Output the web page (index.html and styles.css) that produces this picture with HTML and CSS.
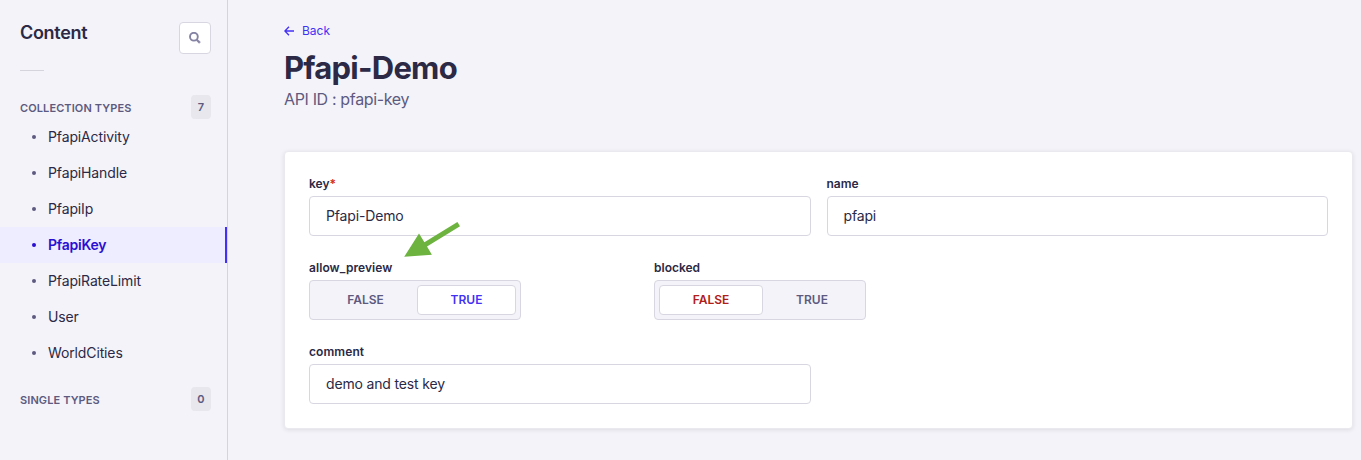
FILE: index.html
```html
<!DOCTYPE html>
<html lang="en">
<head>
<meta charset="utf-8">
<title>Pfapi-Demo</title>
<link rel="stylesheet" href="styles.css">
</head>
<body>
<div class="app">
  <nav class="sidebar">
    <div class="sidebar-head">
      <h2 class="sidebar-title">Content</h2>
      <button class="search" aria-label="Search">
        <svg width="12" height="12" viewBox="0 0 12 12" fill="none" stroke="#8583a3"><circle cx="4.9" cy="4.7" r="3.9" stroke-width="1.9"/><path d="M7.8 7.7h1.2l2.3 2.4-1.2 1.2-2.3-2.3z" fill="#8583a3" stroke-width=".7"/></svg>
      </button>
    </div>
    <div class="divider"></div>
    <div class="section-head"><span class="section-name">COLLECTION TYPES</span><span class="count">7</span></div>
    <ul class="links">
      <li class="link"><span>PfapiActivity</span></li>
      <li class="link"><span>PfapiHandle</span></li>
      <li class="link"><span>PfapiIp</span></li>
      <li class="link active"><span>PfapiKey</span></li>
      <li class="link"><span>PfapiRateLimit</span></li>
      <li class="link"><span>User</span></li>
      <li class="link"><span>WorldCities</span></li>
    </ul>
    <div class="section-head single"><span class="section-name">SINGLE TYPES</span><span class="count">0</span></div>
  </nav>
  <main class="main">
    <a class="back">
      <svg width="10" height="10" viewBox="0 0 10 10" fill="none" stroke="#4330f5" stroke-width="1.3"><path d="M10 5H1M5 .7L.9 5 5 9.3"/></svg>
      <span class="back-text">Back</span>
    </a>
    <h1 class="title">Pfapi-Demo</h1>
    <p class="subtitle">API ID : pfapi-key</p>
    <form class="card">
      <div class="field half">
        <label class="label">key<span class="required">*</span></label>
        <div class="input">Pfapi-Demo</div>
      </div>
      <div class="field half">
        <label class="label">name</label>
        <div class="input">pfapi</div>
      </div>
      <div class="field third">
        <label class="label wide">allow_preview</label>
        <div class="toggle"><span class="option off">FALSE</span><span class="option on selected">TRUE</span></div>
        <svg class="pointer" width="58" height="38" viewBox="0 0 58 38" fill="#6cb33f"><path d="M1.2 35.8L16 12.4l5.4 8.9L54.4 .9l2.6 4.3L24 25.4l4.9 8.4z"/></svg>
      </div>
      <div class="field third">
        <label class="label">blocked</label>
        <div class="toggle"><span class="option off selected">FALSE</span><span class="option on">TRUE</span></div>
      </div>
      <div class="field half new-row">
        <label class="label wide">comment</label>
        <div class="input">demo and test key</div>
      </div>
    </form>
  </main>
</div>
</body>
</html>
```
FILE: styles.css
```css
* { box-sizing: border-box; }
body { margin: 0; background: #f4f3f9; color: #2b2945; font-family: Inter, "Liberation Sans", sans-serif; }
h1, h2, p, ul { margin: 0; padding: 0; }
.app { display: flex; height: 460px; overflow: hidden; }
.sidebar { width: 228px; flex: none; border-right: 1px solid #d5d4dc; }
.sidebar-head { display: flex; justify-content: space-between; align-items: flex-start; padding: 22px 16px 0 20px; }
.sidebar-title { font-size: 18px; line-height: 22px; font-weight: 600; letter-spacing: -0.3px; }
.search { width: 32px; height: 32px; padding: 0; display: flex; align-items: center; justify-content: center; background: #fff; border: 1px solid #d8d7e1; border-radius: 4px; }
.divider { width: 24px; height: 1px; margin: 16px 0 24px 20px; background: #d5d4dc; }
.section-head { display: flex; justify-content: space-between; align-items: center; height: 24px; padding: 0 16px 0 20px; font-size: 11px; font-weight: 600; color: #5d5a80; letter-spacing: 0.1px; }
.section-name { padding-top: 2px; }
.single { margin-top: 16px; }
.count { width: 20px; height: 24px; line-height: 24px; text-align: center; border-radius: 4px; background: #e8e7ed; }
.links { list-style: none; }
.link { display: flex; align-items: center; gap: 12px; height: 36px; padding-left: 32px; font-size: 14px; letter-spacing: -0.13px; }
.link span { padding-bottom: 2px; }
.link::before { content: ""; width: 4px; height: 4px; border-radius: 50%; background: #5d5a80; }
.active { background: #eeecff; color: #2a0fd2; font-weight: 600; letter-spacing: -0.25px; border-right: 2px solid #4330f5; }
.active::before { background: #2a0fd2; }
.main { flex: 1; padding: 23px 8px 0 56px; }
.back { display: flex; align-items: center; gap: 8px; height: 16px; font-size: 12px; color: #4330f5; }
.back-text { padding-bottom: 2px; }
.title { margin-top: 9px; font-size: 31px; line-height: 40px; font-weight: 700; letter-spacing: -0.75px; height: 40px; }
.subtitle { margin-top: 1px; font-size: 16px; line-height: 20px; letter-spacing: -0.35px; color: #5d5a80; }
.card { display: grid; grid-template-columns: repeat(12, minmax(0, 1fr)); gap: 24px 16px; margin-top: 42px; padding: 24px; background: #fff; border: 1px solid #eae9ef; border-radius: 4px; box-shadow: 0 1px 4px rgba(33, 33, 52, 0.1); }
.field { position: relative; }
.half { grid-column: span 6; }
.third { grid-column: span 4; }
.new-row { grid-column: 1 / span 6; }
.label { display: block; height: 16px; margin-bottom: 4px; font-size: 12px; line-height: 16px; font-weight: 600; }
.wide { letter-spacing: 0.08px; }
.required { color: #d02b20; }
.input { height: 40px; padding: 0 16px; border: 1px solid #d8d7e1; border-radius: 4px; font-size: 14px; line-height: 38px; letter-spacing: -0.16px; }
.toggle { display: flex; width: 212px; height: 40px; padding: 4px; border: 1px solid #d8d7e1; border-radius: 4px; background: #f4f3f9; }
.option { display: flex; align-items: center; justify-content: center; padding-bottom: 2px; border: 1px solid transparent; border-radius: 4px; font-size: 12px; font-weight: 600; color: #5d5a80; }
.off { width: 104px; }
.on { flex: none; width: 98px; }
.on.selected { width: 99px; }
.selected { background: #fff; border-color: #d8d7e1; }
.off.selected { flex: none; color: #b02018; }
.on.selected { color: #4330f5; }
.pointer { position: absolute; left: 94px; top: -39px; }
```
